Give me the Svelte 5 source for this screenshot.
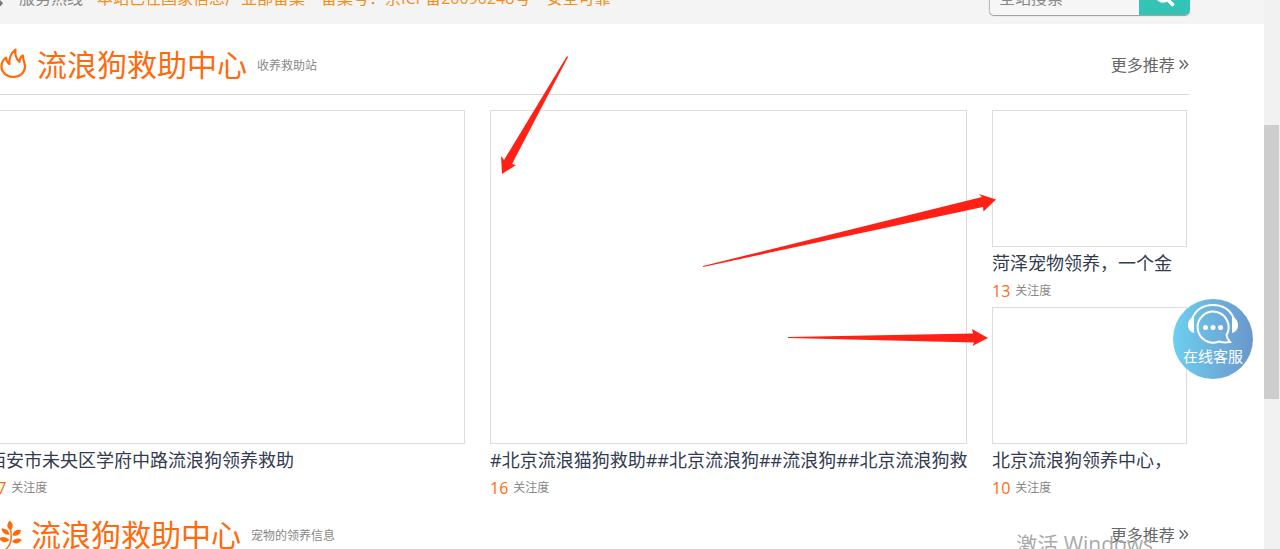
<script>
    let keyword = $state('');

    // Sections of the adoption page
    const cats = [
        { title: '西安市未央区学府中路流浪狗领养救助', count: 17 },
        { title: '#北京流浪猫狗救助##北京流浪狗##流浪狗##北京流浪狗救', count: 16 }
    ];
    const side = [
        { title: '菏泽宠物领养，一个金', count: 13 },
        { title: '北京流浪狗领养中心，', count: 10 }
    ];
</script>

{#snippet card(item, small)}
    <a class="card" class:small href="#detail">
        <div class="thumb"></div>
        <h3>{item.title}</h3>
        <p><b>{item.count}</b><span>关注度</span></p>
    </a>
{/snippet}

{#snippet more()}
    <a class="more" href="#more">
        更多推荐
        <svg width="10" height="12" viewBox="0 0 10 12" aria-hidden="true"><path d="M.7 1.200 4.500 5.500 .7 9.800M4.900 1.200 8.700 5.500 4.900 9.800" /></svg>
    </a>
{/snippet}

<div class="page">
    <main>
        <div class="topbar">
            <div class="row">
                <svg class="phone" width="16" height="16" viewBox="0 0 16 16" aria-hidden="true"><path d="M3 1 6 4 5 7 9 11 12 10 15 13 13 16Q2 14 0 3Z" /></svg>
                <span class="label">服务热线</span>
                <span class="notice">
                    <span>本站已在国家信息产业部备案</span>
                    <span>备案号：京ICP备20090248号</span>
                    <span>安全可靠</span>
                </span>
                <form class="search" onsubmit={(e) => e.preventDefault()}>
                    <input type="text" placeholder="全站搜索" aria-label="全站搜索" bind:value={keyword} />
                    <button aria-label="搜索">
                        <svg width="20" height="20" viewBox="0 0 20 20" aria-hidden="true"><circle cx="8" cy="8" r="6" /><path d="M12.5 12.5 17.500 17.500" /></svg>
                    </button>
                </form>
            </div>
        </div>

        <section>
            <header>
                <svg class="icon" width="27" height="34" viewBox="0 0 27 34" aria-hidden="true">
                    <path class="line" d="M15.5 1.5C11 5 9 10 9.5 16C7.5 14.5 6 12 6 9.5C3 12 1.5 15 1.5 18C1.5 25 7 29 13.5 29C20 29 25 24.5 25 18.5C25 14 22.5 11.5 23 7.5C20.5 9 19.5 11.5 19.5 14C16.5 11 14.5 6.5 15.5 1.5Z" />
                </svg>
                <h2>流浪狗救助中心</h2>
                <small>收养救助站</small>
                {@render more()}
            </header>
            <div class="list">
                {#each cats as item}
                    {@render card(item, false)}
                {/each}
                <div class="side">
                    {#each side as item}
                        {@render card(item, true)}
                    {/each}
                </div>
            </div>
        </section>

        <section>
            <header>
                <svg class="icon" width="21" height="32" viewBox="0 0 21 32" aria-hidden="true">
                    <path d="M9.500 1.500Q15.500 6 10.500 11.500Q4.500 7.500 9.500 1.500Z" />
                    <path d="M1.500 9.500Q8.500 9 9.500 15.500Q2.500 16.500 1.500 9.500Z" />
                    <path d="M21 11Q20 18 12.500 16.500Q13.500 10 21 11Z" />
                    <path d="M-1 19.500Q4.500 16 9.500 21Q3.500 26 -1 19.500Z" />
                    <path d="M22 21Q16.500 27 12 22.500Q16.500 17.500 22 21Z" />
                    <path class="stem" d="M10.500 10Q11.500 15 11 21Q10.500 26 6 30" />
                </svg>
                <h2>流浪狗救助中心</h2>
                <small>宠物的领养信息</small>
                {@render more()}
            </header>
        </section>
    </main>

    <div class="scrollbar"><div class="handle"></div></div>

    <div class="watermark">激活 Windows</div>

    <button class="service">
        <svg width="52" height="44" viewBox="0 0 52 44" aria-hidden="true">
            <path class="band" d="M5 17C9 7 16 3 26 3S43 7 47 17" />
            <path class="ear" d="M7 15V31C3 30 1 27 1 23S3 16 7 15ZM45 15V31C49 30 51 27 51 23S49 16 45 15Z" />
            <path class="bubble" d="M39.500 33A15.500 15.500 0 1 0 32 39.500Q37 41 43 40Q40 37 39.500 33Z" />
            <circle cx="18.500" cy="25.500" r="2.500" /><circle cx="26" cy="25.500" r="2.500" /><circle cx="33.500" cy="25.500" r="2.500" />
        </svg>
        在线客服
    </button>

    <!-- red pointer arrows -->
    <svg class="arrows" width="1280" height="549" viewBox="0 0 1280 549" aria-hidden="true">
        <path d="M567 56 568 57 512 164 516 165 502 174 501 156 504 160Z" />
        <path d="M703 266 982 197 979 194 996 199.500 983.500 211.500 983 207 703 267Z" />
        <path d="M788 337 973 333.500 972 329 988 338 972.500 346 974 342.500 788 338Z" />
    </svg>
</div>

<style>
    :global(body) {
        margin: 0;
    }
    .page {
        position: relative;
        display: flex;
        height: 100vh;
        overflow: hidden;
        background: #fff;
        font-family: 'Open Sans', 'Noto Sans CJK SC', sans-serif;
        color: #666;
    }
    main {
        flex: 1;
        min-width: 0;
    }
    .topbar {
        display: flex;
        align-items: flex-end;
        box-sizing: border-box;
        height: 24px;
        margin-bottom: 7px;
        padding: 0 74px 9px 0;
        background: #f4f4f4;
    }
    .row {
        display: flex;
        flex: 1;
        align-items: center;
        height: 34px;
        margin-left: -12px;
        font-size: 16px;
        line-height: 24px;
        white-space: nowrap;
    }
    .phone {
        margin-right: 15px;
        fill: #777;
    }
    .label {
        margin-right: 14px;
        color: #888;
    }
    .notice {
        display: flex;
        gap: 16px;
        color: #f18e1c;
    }
    .search {
        display: flex;
        box-sizing: border-box;
        width: 201px;
        height: 34px;
        margin-left: auto;
        border-radius: 5px;
        overflow: hidden;
        border-left: 1px solid #bbb;
        box-shadow: 0 1px 1px #999;
    }
    .search input {
        flex: 1;
        min-width: 0;
        padding: 0 9px;
        border: 0;
        background: #f6f6f6;
        font: inherit;
    }
    .search input::placeholder {
        color: #888;
    }
    .search button {
        width: 51px;
        padding: 0;
        border: 0;
        background: #33c4b5;
    }
    .search svg {
        fill: none;
        stroke: #fff;
        stroke-width: 3.5;
        stroke-linecap: round;
    }
    section {
        margin: 0 75px 0 -12px;
    }
    header {
        display: flex;
        align-items: center;
        padding: 15px 0 10px 12px;
        border-bottom: 1px solid #d9d9d9;
    }
    .icon {
        margin-right: 10px;
        overflow: visible;
        fill: #ff6a0d;
    }
    .icon .line {
        fill: none;
        stroke: #ff6a0d;
        stroke-width: 2.2;
        stroke-linejoin: round;
    }
    .icon .stem {
        fill: none;
        stroke: #ff6a0d;
        stroke-width: 1.5;
    }
    h2 {
        margin: 0 10px 0 0;
        font-size: 30px;
        font-weight: 400;
        line-height: 38px;
        color: #ff6a0d;
    }
    small {
        font-size: 12px;
        color: #888;
    }
    .more {
        margin-left: auto;
        font-size: 16px;
        line-height: 24px;
        color: #666;
        text-decoration: none;
    }
    .more svg {
        fill: none;
        stroke: #666;
        stroke-width: 1.4;
    }
    .list {
        display: grid;
        grid-template-columns: 1fr 1fr 195px;
        gap: 25px;
        padding: 15px 2px 1px 0;
    }
    .side {
        display: grid;
        gap: 4px;
    }
    .card {
        display: block;
        min-width: 0;
        color: #333b4f;
        text-decoration: none;
    }
    .thumb {
        box-sizing: border-box;
        height: 334px;
        border: 1px solid #dcdcdc;
    }
    .small .thumb {
        height: 137px;
    }
    h3 {
        margin: 0;
        overflow: hidden;
        font-size: 18px;
        font-weight: 400;
        line-height: 32px;
        white-space: nowrap;
    }
    .card p {
        display: flex;
        align-items: center;
        gap: 5px;
        margin: 0;
        line-height: 24px;
        font-size: 12px;
        color: #888;
    }
    .card b {
        font-size: 16px;
        font-weight: 400;
        color: #ff6a0d;
    }
    .scrollbar {
        box-sizing: border-box;
        width: 16px;
        padding: 125px 1px 0 0;
        background: #f1f1f1;
    }
    .handle {
        height: 274px;
        background: #cdcdcd;
    }
    .watermark {
        position: absolute;
        right: 127px;
        bottom: -10px;
        font-size: 21px;
        line-height: 30px;
        color: #aaa;
    }
    .service {
        position: absolute;
        top: 299px;
        right: 27px;
        display: flex;
        flex-direction: column;
        align-items: center;
        width: 80px;
        height: 80px;
        padding: 3px 0 0;
        border: 0;
        border-radius: 50%;
        background: linear-gradient(90deg, #6dcff0, #6b96cc);
        font: inherit;
        font-size: 15px;
        line-height: 20px;
        color: #fff;
        white-space: nowrap;
    }
    .service svg {
        flex: none;
        fill: #fff;
    }
    .service .band,
    .service .bubble {
        fill: none;
        stroke: #fff;
        stroke-width: 2;
    }
    .arrows {
        position: absolute;
        top: 0;
        left: 0;
        fill: #ff2116;
        pointer-events: none;
    }
</style>
